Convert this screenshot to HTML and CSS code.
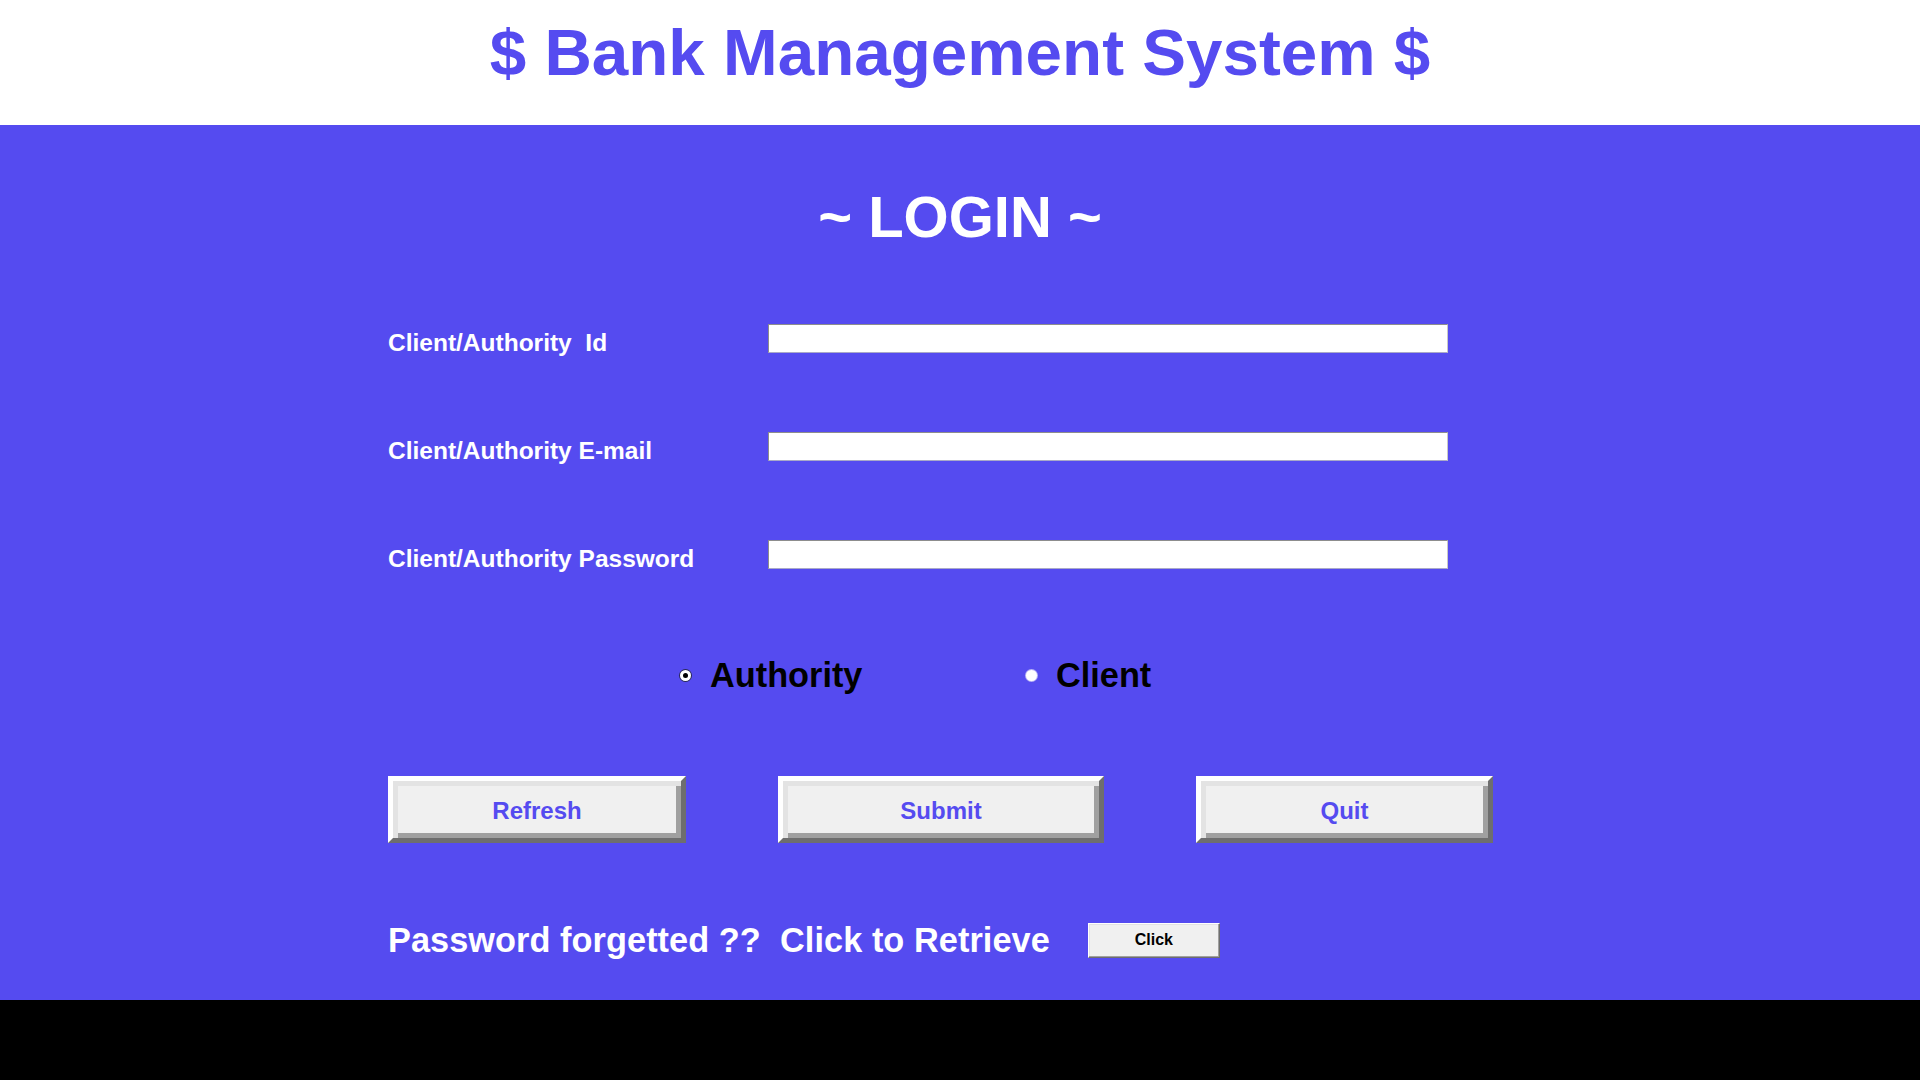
FILE: index.html
```html
<!DOCTYPE html>
<html lang="en">
<head>
<meta charset="utf-8">
<title>Bank Management System</title>
<link rel="stylesheet" href="styles.css">
</head>
<body>
<header class="topbar">
  <h1 class="app-title">$ Bank Management System $</h1>
</header>
<main class="login-panel">
  <h2 class="login-title">~ LOGIN ~</h2>
  <div class="fields">
    <div class="field-row">
      <label class="field-label">Client/Authority&nbsp; Id</label>
      <span class="field-input"></span>
    </div>
    <div class="field-row">
      <label class="field-label">Client/Authority E-mail</label>
      <span class="field-input"></span>
    </div>
    <div class="field-row">
      <label class="field-label">Client/Authority Password</label>
      <span class="field-input"></span>
    </div>
  </div>
  <div class="radio-row">
    <div class="radio-item radio-item-first">
      <span class="radio radio-checked"></span>
      <span class="radio-text">Authority</span>
    </div>
    <div class="radio-item">
      <span class="radio"></span>
      <span class="radio-text">Client</span>
    </div>
  </div>
  <div class="button-row">
    <button class="bevel-btn btn-refresh">Refresh</button>
    <button class="bevel-btn btn-submit">Submit</button>
    <button class="bevel-btn btn-quit">Quit</button>
  </div>
  <div class="forgot-row">
    <span class="forgot-text">Password forgetted ??&nbsp; Click to Retrieve</span>
    <button class="small-btn">Click</button>
  </div>
</main>
<footer class="bottom-bar"></footer>
</body>
</html>
```

FILE: styles.css
```css
* { box-sizing: border-box; }

html, body {
  margin: 0;
  padding: 0;
  width: 1920px;
  height: 1080px;
  overflow: hidden;
  font-family: "Liberation Sans", Arial, sans-serif;
  background: #000;
}

.topbar {
  height: 125px;
  background: #ffffff;
  padding-top: 20px;
}

.app-title {
  margin: 0;
  text-align: center;
  font-size: 65.6px;
  line-height: 66px;
  font-weight: bold;
  color: #554bf0;
}

.login-panel {
  height: 875px;
  background: #554bf0;
  padding: 63px 0 0 388px;
}

.login-title {
  margin: 0;
  margin-left: -388px;
  text-align: center;
  font-size: 58px;
  line-height: 58px;
  font-weight: bold;
  color: #ffffff;
}

.fields {
  margin-top: 78px;
  display: flex;
  flex-direction: column;
  gap: 80px;
}

.field-row {
  display: flex;
  align-items: flex-start;
  height: 28px;
}

.field-label {
  width: 380px;
  margin-top: 5px;
  font-size: 24.5px;
  line-height: 28px;
  font-weight: bold;
  color: #ffffff;
  white-space: nowrap;
}

.field-input {
  display: block;
  width: 680px;
  height: 29px;
  background: #ffffff;
  border: 1px solid;
  border-color: #8d8d8d #c8c8c8 #a9a9c8 #8d8d8d;
}

.radio-row {
  margin-top: 87px;
  padding-left: 292px;
  display: flex;
  align-items: center;
  height: 40px;
}

.radio-item {
  display: flex;
  align-items: center;
  gap: 19px;
}

.radio-item-first {
  width: 346px;
}

.radio {
  width: 11px;
  height: 11px;
  border-radius: 50%;
  background: #ffffff;
  box-shadow: 0 0 0 1px #b9b4f5;
  position: relative;
}

.radio-checked {
  box-shadow: 0 0 0 1px #2a2a55;
}

.radio-checked::after {
  content: "";
  position: absolute;
  left: 3px;
  top: 3px;
  width: 5px;
  height: 5px;
  border-radius: 50%;
  background: #000000;
}

.radio-text {
  font-size: 34.3px;
  line-height: 40px;
  font-weight: bold;
  color: #000000;
}

.button-row {
  margin-top: 81px;
  display: flex;
  gap: 92px;
}

.bevel-btn {
  height: 67px;
  padding: 2px 0 0 0;
  background: #f0f0f0;
  border: 5px solid;
  border-color: #ffffff #6e6e6e #6e6e6e #ffffff;
  box-shadow: inset 5px 5px 0 #e3e3e3, inset -5px -5px 0 #a0a0a0;
  font-family: "Liberation Sans", Arial, sans-serif;
  font-size: 24px;
  font-weight: bold;
  color: #554bf0;
}

.btn-refresh { width: 298px; }
.btn-submit { width: 326px; }
.btn-quit { width: 297px; }

.forgot-row {
  margin-top: 77px;
  display: flex;
  align-items: center;
  gap: 38px;
}

.forgot-text {
  font-size: 34.3px;
  letter-spacing: 0.06px;
  line-height: 40px;
  font-weight: bold;
  color: #ffffff;
  white-space: nowrap;
}

.small-btn {
  width: 132px;
  height: 35px;
  padding: 0;
  background: #f0f0f0;
  border: 1px solid;
  border-color: #ffffff #6e6e6e #6e6e6e #ffffff;
  box-shadow: inset -1px -1px 0 #a0a0a0, inset 1px 1px 0 #e3e3e3;
  font-family: "Liberation Sans", Arial, sans-serif;
  font-size: 16px;
  font-weight: bold;
  color: #000000;
}

.bottom-bar {
  height: 80px;
  background: #000000;
}
```
